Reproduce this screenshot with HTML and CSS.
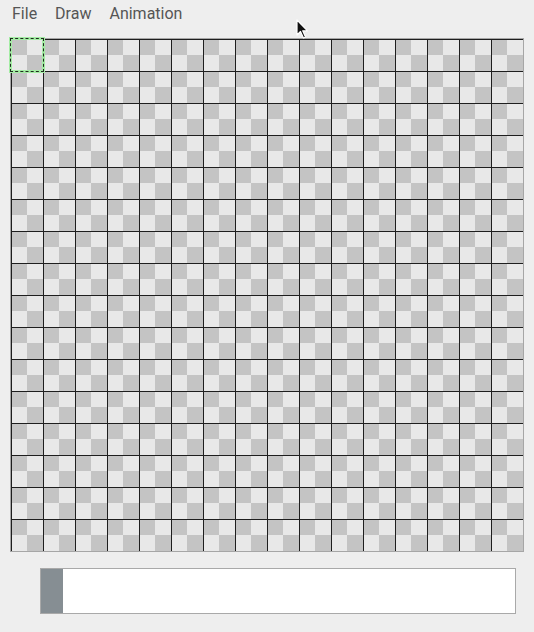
FILE: index.html
```html
<!DOCTYPE html>
<html>
<head>
<meta charset="utf-8">
<link rel="stylesheet" href="styles.css">
</head>
<body>
<div class="app">
  <nav class="menubar">
    <span class="menu-item">File</span>
    <span class="menu-item">Draw</span>
    <span class="menu-item">Animation</span>
  </nav>
  <div class="canvas-frame">
    <div class="canvas">
      <div class="selection"></div>
    </div>
  </div>
  <div class="timeline">
    <div class="frame-thumb"></div>
  </div>
  <svg class="cursor" width="14" height="22" viewBox="0 0 14 22">
    <path d="M1 1 L1 16 L4.5 12.5 L7.5 19 L9.5 18 L6.7 11.8 L11.5 11.8 Z" fill="#111" stroke="#fff" stroke-width="1.2" stroke-linejoin="round"/>
  </svg>
</div>
</body>
</html>
```
FILE: styles.css
```css
html, body {
  margin: 0;
  padding: 0;
  background: #eeeeee;
}
.app {
  position: relative;
  width: 534px;
  height: 632px;
  font-family: Roboto, "Noto Sans", sans-serif;
}
.menubar {
  display: flex;
  gap: 18px;
  padding: 4px 0 14px 12px;
  height: 20px;
  font-size: 16px;
  line-height: 20px;
  color: #555555;
}
.canvas-frame {
  margin-left: 10px;
  width: 512px;
  height: 512px;
  border: 1px solid #a6a6a6;
}
.canvas {
  position: relative;
  width: 512px;
  height: 512px;
  background-image:
    linear-gradient(to right, #1e1e1e 1px, transparent 1px),
    linear-gradient(to bottom, #1e1e1e 1px, transparent 1px),
    conic-gradient(#e8e8e8 0 25%, #c4c4c4 0 50%, #e8e8e8 0 75%, #c4c4c4 0);
  background-size: 32px 32px;
  background-position: 0 0;
}
.selection {
  position: absolute;
  box-sizing: border-box;
  left: -2px;
  top: -2px;
  width: 36px;
  height: 36px;
  border: 3px solid #a4eca4;
  outline: 1px dashed #1e2a1e;
  outline-offset: -2px;
}
.timeline {
  display: flex;
  margin: 16px 0 0 40px;
  width: 474px;
  height: 44px;
  border: 1px solid #a9a9a9;
  background: #ffffff;
}
.frame-thumb {
  width: 22px;
  background: #868e93;
}
.cursor {
  position: absolute;
  left: 296px;
  top: 19px;
}
```
